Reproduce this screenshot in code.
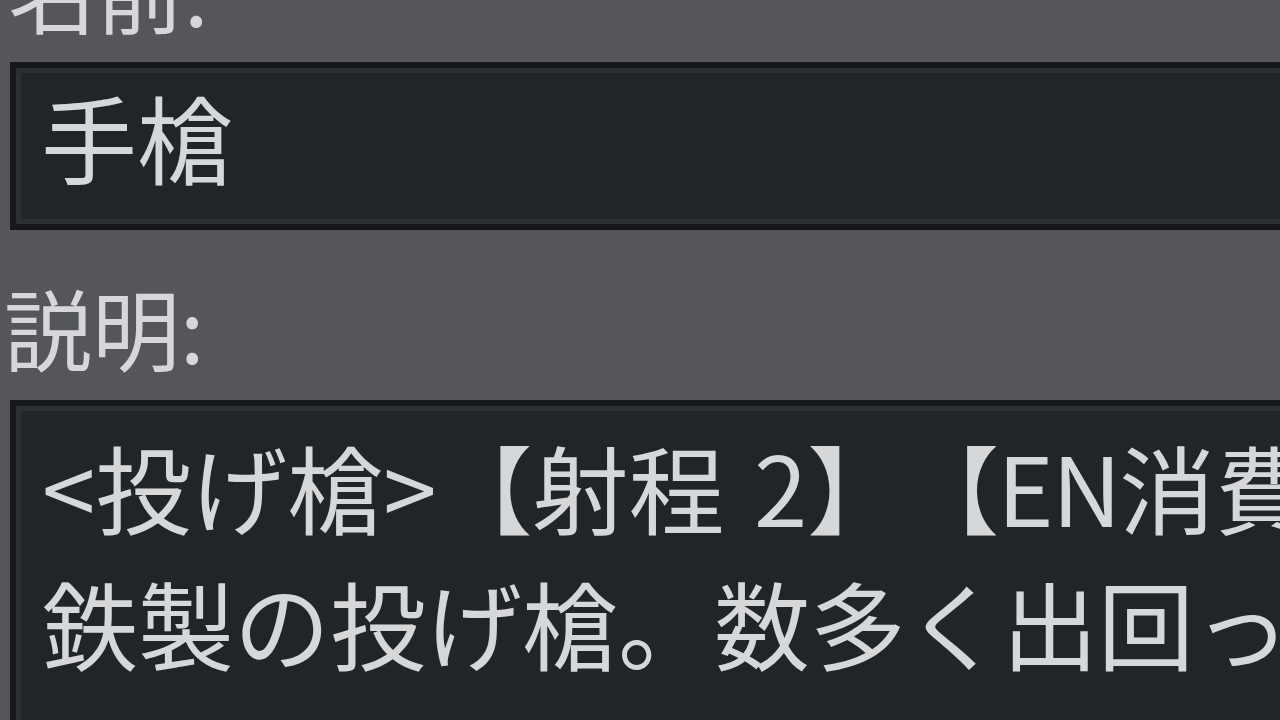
export default function App() {
  const font = {
    fontFamily: '"Noto Sans CJK JP", "Noto Sans", sans-serif',
  };
  return (
    <div
      className="w-[1280px] h-[720px] overflow-hidden bg-[#545659] text-[#d6d7d8] [text-spacing-trim:space-all]"
      style={font}
    >
      {/* 名前 */}
      <div className="-mt-[61px] pl-[8px] text-[88px] leading-[100px]">名前:</div>

      <div className="mt-[23px] ml-[10px] w-[1320px] h-[168px] border-[6px] border-[#16181a] bg-[#222528]">
        <div className="h-full border-[5px] border-[#2c2f33] pl-[20px] pt-[3px] text-[96px] leading-[120px]">
          手槍
        </div>
      </div>

      {/* 説明 */}
      <div className="mt-[46px] pl-[4px] text-[88px] leading-[100px]">説明:</div>

      <div className="mt-[24px] ml-[10px] w-[1320px] h-[400px] border-[6px] border-[#16181a] bg-[#222528]">
        <div className="h-full border-[5px] border-[#2c2f33] pl-[21px] pt-[7px] text-[96px] leading-[136px] whitespace-nowrap [word-spacing:8px]">
          <div>&lt;投げ槍&gt;【射程 2】<span className="tracking-[-2px]">【EN</span>消費 10】</div>
          <div>鉄製の投げ槍。数多く出回っている。</div>
        </div>
      </div>
    </div>
  );
}
